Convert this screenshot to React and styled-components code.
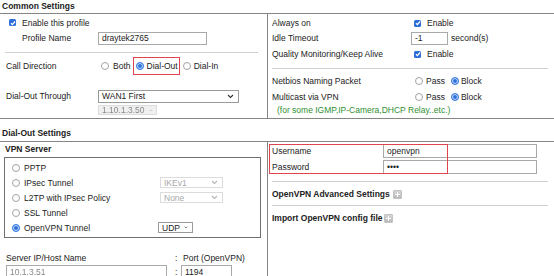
import React from 'react';
import styled, { createGlobalStyle } from 'styled-components';

const GlobalStyle = createGlobalStyle`
  html, body { margin: 0; padding: 0; background: #fff; }
  body {
    font-family: 'Liberation Sans', Arial, sans-serif;
    font-size: 8.5px;
    color: #222;
  }
`;

const Page = styled.div`
  width: 554px;
  height: 276px;
  overflow: hidden;
`;

const SectionTitle = styled.div`
  height: ${p => p.$h}px;
  box-sizing: border-box;
  display: flex;
  align-items: flex-end;
  padding: 0 0 ${p => p.$pb}px 2px;
  font-weight: bold;
  line-height: 10px;
`;

const Panel = styled.div`
  display: grid;
  grid-template-columns: 267px 1fr;
  box-sizing: border-box;
  height: ${p => (p.$h ? `${p.$h}px` : 'auto')};
  border-top: 1px solid #858585;
  border-bottom: ${p => (p.$open ? 'none' : '1px solid #858585')};
`;

const LeftCell = styled.div`
  padding-top: 1px;
`;

const RightCell = styled.div`
  border-left: 1px solid #858585;
  padding: 1px 6px 0 4px;
`;

const Row = styled.div`
  display: flex;
  align-items: center;
  height: ${p => p.$h || 14}px;
  margin-top: ${p => p.$mt || 0}px;
  padding-left: ${p => p.$pl || 0}px;
  white-space: nowrap;
`;

const Label = styled.span`
  width: ${p => p.$w}px;
  flex: none;
`;

const Divider = styled.div`
  height: 1px;
  background: #cfcfcf;
  margin: ${p => p.$mt}px ${p => p.$mr || 0}px 0 ${p => p.$ml || 0}px;
`;

const TextInput = styled.div`
  box-sizing: border-box;
  width: ${p => p.$w}px;
  height: ${p => p.$h || 13}px;
  border: 1px solid #a9a9a9;
  background: #fff;
  padding-left: 3px;
  display: flex;
  align-items: center;
  flex: none;
`;

const Select = styled.div`
  box-sizing: border-box;
  width: ${p => p.$w}px;
  height: ${p => p.$h || 13}px;
  border: 1px solid ${p => (p.$disabled ? '#dcdcdc' : '#9a9a9a')};
  color: ${p => (p.$disabled ? '#a8a8a8' : '#222')};
  background: ${p => (p.$muted ? '#f0f0f0' : '#fff')};
  padding: 0 4px 0 3px;
  display: flex;
  align-items: center;
  justify-content: ${p => (p.$tight ? 'flex-start' : 'space-between')};
  gap: 4px;
  flex: none;
`;

const Checkbox = styled.span`
  width: 7px;
  height: 7px;
  border-radius: 1.5px;
  background: #2c6fd9;
  display: inline-flex;
  align-items: center;
  justify-content: center;
  flex: none;
  margin-right: 6px;
`;

const Radio = styled.span`
  box-sizing: border-box;
  width: 8px;
  height: 8px;
  border-radius: 50%;
  flex: none;
  border: 1px solid ${p => (p.$on ? '#3a7ee2' : '#a3a3a3')};
  background: ${p => (p.$on ? '#2f72dc' : '#fff')};
  box-shadow: ${p => (p.$on ? 'inset 0 0 0 1px #cfe0fa' : 'none')};
  margin: 0 ${p => p.$gap ?? 4}px 0 ${p => p.$ml || 0}px;
`;

const Choice = styled.span`
  display: inline-flex;
  align-items: center;
  margin-right: ${p => p.$mr || 0}px;
`;

const Highlight = styled.span`
  display: inline-flex;
  align-items: center;
  height: 18px;
  box-sizing: border-box;
  border: 1px solid #e0444e;
  padding: 0 1px 0 2px;
  margin-right: 3px;
`;

const Note = styled.div`
  color: #2f8f2f;
  height: 12px;
  line-height: 12px;
  padding-left: 5px;
`;

const Bold = styled.span`
  font-weight: bold;
`;

const VpnBox = styled.div`
  margin: 2px 6px 0 4px;
  border: 1px solid #6f6f6f;
  padding: 2px 0 2px 7px;
`;

const OptionRow = styled.div`
  display: grid;
  grid-template-columns: 148px auto;
  align-items: center;
  height: 15px;
`;

const OptionLabel = styled.span`
  display: flex;
  align-items: center;
`;

const Colon = styled.span`
  width: ${p => p.$w}px;
  flex: none;
`;

const CredGroup = styled.div`
  position: relative;
  padding-top: 0;
`;

const RedFrame = styled.div`
  position: absolute;
  left: -3px;
  top: 1px;
  width: 179px;
  height: 30px;
  box-sizing: border-box;
  border: 1px solid #e0444e;
  pointer-events: none;
`;

const LinkRow = styled.div`
  display: flex;
  align-items: center;
  height: 12px;
  margin-top: ${p => p.$mt}px;
  font-weight: bold;
`;

const PlusIcon = styled.span`
  width: 9px;
  height: 9px;
  box-sizing: border-box;
  margin-left: ${p => p.$ml}px;
  border-radius: 1px;
  background: linear-gradient(#d6d6d6, #b9b9b9);
  border: 1px solid #c2c2c2;
  position: relative;
  &::before, &::after {
    content: '';
    position: absolute;
    background: #fff;
  }
  &::before { left: 1px; right: 1px; top: 3px; height: 1px; }
  &::after { top: 1px; bottom: 1px; left: 3px; width: 1px; }
`;

const Blurred = styled.span`
  filter: blur(0.5px);
  color: #888;
`;

const Check = () => (
  <svg width="6" height="6" viewBox="0 0 6 6">
    <polyline points="1,3.2 2.4,4.6 5,1.5" fill="none" stroke="#fff" strokeWidth="1.3" />
  </svg>
);

const Chevron = ({ color = '#333' }) => (
  <svg width="7" height="5" viewBox="0 0 7 5">
    <polyline points="1,1 3.5,3.5 6,1" fill="none" stroke={color} strokeWidth="1.1" />
  </svg>
);

export default function App() {
  return (
    <Page>
      <GlobalStyle />
      <SectionTitle $h={13} $pb={2}>Common Settings</SectionTitle>
      <Panel $h={106}>
        <LeftCell>
          <Row $h={15} $pl={9}>
            <Checkbox><Check /></Checkbox>
            Enable this profile
          </Row>
          <Row $h={16} $pl={22}>
            <Label $w={76}>Profile Name</Label>
            <TextInput $w={109}>draytek2765</TextInput>
          </Row>
          <Divider $mt={6} $ml={5} $mr={9} />
          <Row $mt={6} $pl={6}>
            <Label $w={95}>Call Direction</Label>
            <Choice $mr={2}><Radio />Both</Choice>
            <Highlight><Radio $on $gap={3} />Dial-Out</Highlight>
            <Choice><Radio $gap={3} />Dial-In</Choice>
          </Row>
          <Row $mt={16} $pl={6}>
            <Label $w={92}>Dial-Out Through</Label>
            <Select $w={141}>WAN1 First<Chevron /></Select>
          </Row>
          <Row $h={10} $mt={2} $pl={98}>
            <Select $w={59} $h={10} $disabled $muted $tight>
              <Blurred>1.10.1.3.50</Blurred>
              <Chevron color="#aaa" />
            </Select>
          </Row>
        </LeftCell>
        <RightCell>
          <Row $mt={1}>
            <Label $w={142}>Always on</Label>
            <Checkbox><Check /></Checkbox>Enable
          </Row>
          <Row $mt={1}>
            <Label $w={139}>Idle Timeout</Label>
            <TextInput $w={37}>-1</TextInput>
            <span style={{ marginLeft: 3 }}>second(s)</span>
          </Row>
          <Row $mt={2}>
            <Label $w={142}>Quality Monitoring/Keep Alive</Label>
            <Checkbox><Check /></Checkbox>Enable
          </Row>
          <Divider $mt={7} />
          <Row $mt={5}>
            <Label $w={139}>Netbios Naming Packet</Label>
            <Choice $mr={6}><Radio $ml={4} $gap={3} />Pass</Choice>
            <Choice><Radio $on $gap={2} />Block</Choice>
          </Row>
          <Row $mt={2}>
            <Label $w={139}>Multicast via VPN</Label>
            <Choice $mr={6}><Radio $ml={4} $gap={3} />Pass</Choice>
            <Choice><Radio $on $gap={2} />Block</Choice>
          </Row>
          <Note>(for some IGMP,IP-Camera,DHCP Relay..etc.)</Note>
        </RightCell>
      </Panel>

      <SectionTitle $h={22} $pb={3}>Dial-Out Settings</SectionTitle>
      <Panel $open>
        <LeftCell>
          <Row $h={12} $pl={5}><Bold>VPN Server</Bold></Row>
          <VpnBox>
            <OptionRow>
              <OptionLabel><Radio />PPTP</OptionLabel>
            </OptionRow>
            <OptionRow>
              <OptionLabel><Radio />IPsec Tunnel</OptionLabel>
              <Select $w={63} $h={11} $disabled>IKEv1<Chevron color="#b5b5b5" /></Select>
            </OptionRow>
            <OptionRow>
              <OptionLabel><Radio />L2TP with IPsec Policy</OptionLabel>
              <Select $w={63} $h={11} $disabled>None<Chevron color="#b5b5b5" /></Select>
            </OptionRow>
            <OptionRow>
              <OptionLabel><Radio />SSL Tunnel</OptionLabel>
            </OptionRow>
            <OptionRow>
              <OptionLabel><Radio $on />OpenVPN Tunnel</OptionLabel>
              <Select $w={35} $h={11} $tight style={{ marginLeft: -2 }}>UDP<Chevron /></Select>
            </OptionRow>
          </VpnBox>
          <Row $h={12} $mt={14} $pl={6}>
            <Label $w={169}>Server IP/Host Name</Label>
            <Colon $w={8}>:</Colon>
            Port (OpenVPN)
          </Row>
          <Row $h={13} $mt={1} $pl={6}>
            <TextInput $w={161}><Blurred>10.1.3.51</Blurred></TextInput>
            <span style={{ width: 8, flex: 'none' }} />
            <Colon $w={6}>:</Colon>
            <TextInput $w={51}>1194</TextInput>
          </Row>
        </LeftCell>
        <RightCell>
          <CredGroup>
            <Row $h={16}>
              <Label $w={111}>Username</Label>
              <TextInput $w={154} $h={14}>openvpn</TextInput>
            </Row>
            <Row $h={16}>
              <Label $w={111}>Password</Label>
              <TextInput $w={154} $h={14}>••••</TextInput>
            </Row>
            <RedFrame />
          </CredGroup>
          <Divider $mt={6} />
          <LinkRow $mt={6}>OpenVPN Advanced Settings<PlusIcon $ml={3} /></LinkRow>
          <Divider $mt={5} />
          <LinkRow $mt={6}>Import OpenVPN config file<PlusIcon $ml={1} /></LinkRow>
        </RightCell>
      </Panel>
    </Page>
  );
}
